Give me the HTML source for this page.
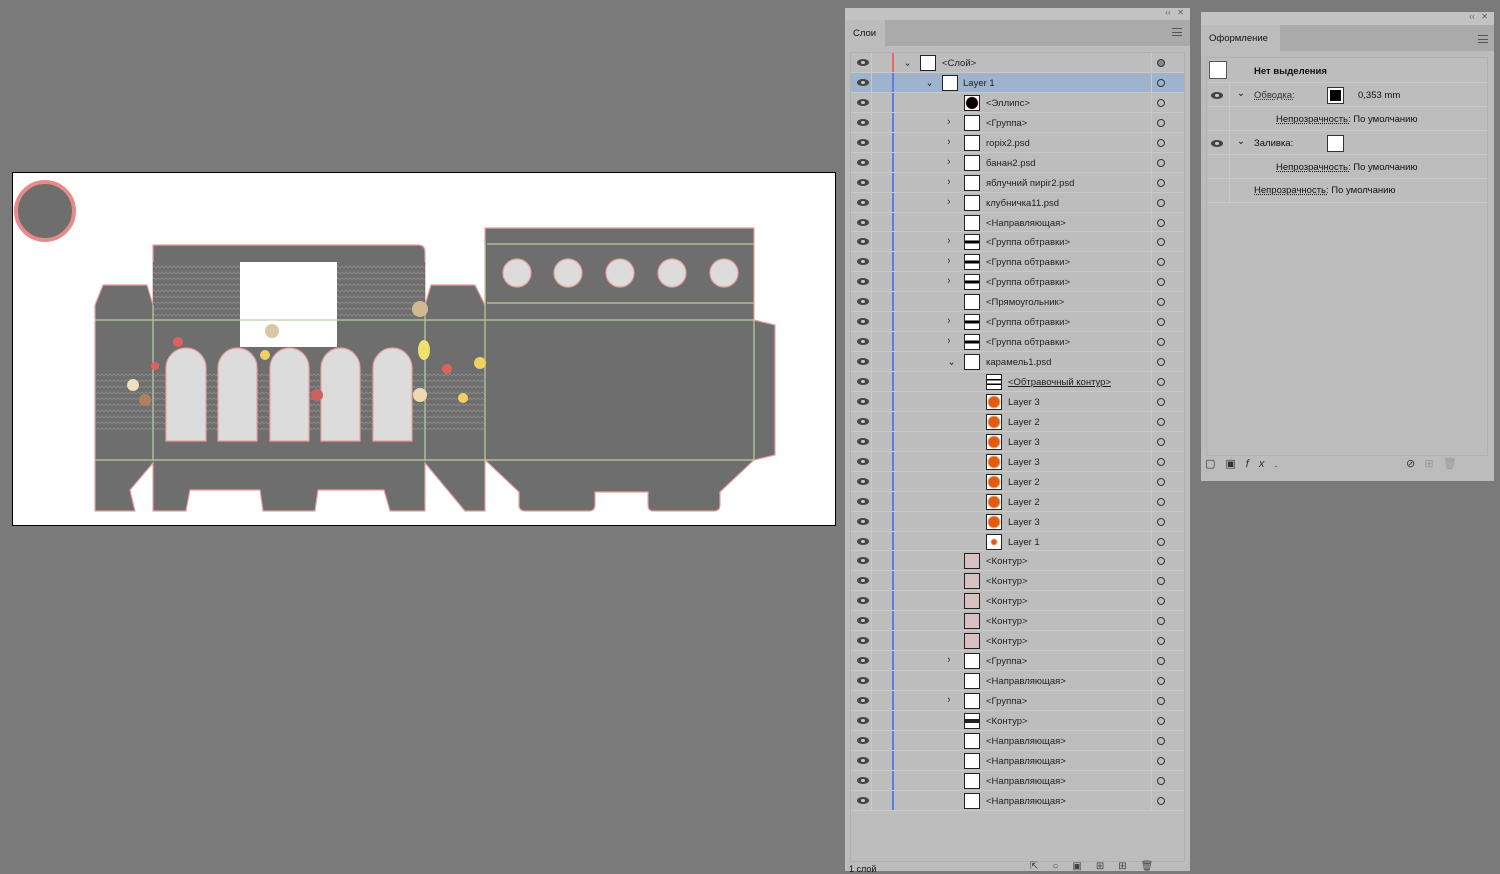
<!DOCTYPE html>
<html><head><meta charset="utf-8"><style>
*{margin:0;padding:0;box-sizing:border-box}
body{width:1500px;height:871px;background:#7a7a7a;position:relative;overflow:hidden;font-family:"Liberation Sans","DejaVu Sans",sans-serif;font-size:9.5px;color:#111}
.p{position:absolute;background:#bcbcbc}
.lst{position:absolute;left:5px;top:44px;width:335px;background:#bdbdbd;border:1px solid #b0b0b0}
.r{position:relative;height:19.94px;border-bottom:1px solid #c9c9c9}
.r.s{background:#9eb3cd}
.r>*{position:absolute}
.e{left:6px;top:6px;width:12px;height:7px;border-radius:50%;background:#444}
.e::after{content:"";position:absolute;left:4px;top:2px;width:4px;height:3px;border-radius:50%;background:#ccc}
.d1{left:20px;top:0;width:1px;height:100%;background:#c9c9c9}
.b{left:41px;top:0;width:2px;height:100%;background:#5a7fe0}
.d2{left:300px;top:0;width:1px;height:100%;background:#c9c9c9}
.c{left:306px;top:6px;width:8px;height:8px;border:1px solid #333;border-radius:50%}
.t{top:2px;width:16px;height:16px;background:#fff;border:1px solid #222}
.x{top:5px;font-size:9.5px;color:#222}
.a{top:3px;font-size:11px;color:#222;transform:scaleX(.8)}
.ap{position:absolute;left:1207px;width:281px;height:24px;border-bottom:1px solid #c9c9c9;font-size:9.5px}
.ap>*{position:absolute}
u{text-decoration:underline dotted}
</style></head><body>

<svg style="position:absolute;left:0;top:0" width="845" height="871">
<defs><pattern id="pt" width="8" height="6" patternUnits="userSpaceOnUse"><rect width="8" height="6" fill="#6e6e6e"/><path d="M0 4 L2 2 L4 4 L6 2 L8 4" stroke="#8a8a8a" stroke-width=".8" fill="none"/></pattern></defs>
<rect x="12.5" y="172.5" width="823" height="353" fill="#fff" stroke="#000"/>
<circle cx="45" cy="211" r="29" fill="#6e6e6e" stroke="#e88a8a" stroke-width="4"/>
<g fill="#6e6e6e" stroke="#e8a0a0" stroke-width="1.2">
<path d="M103 285 H147 L153 305 V245 Q153 245 160 245 H418 Q425 245 425 252 V305 L431 285 H475 L485 305 V228 H754 V320 L775 325 V455 L754 460 L720 492 V505 Q720 511 714 511 H653 Q648 511 648 505 V492 H595 V505 Q595 511 589 511 H525 Q519 511 519 505 V492 L485 460 V511 H465 L425 463 V511 H390 L384 490 H318 L315 511 H263 L260 490 H190 L186 511 H153 V463 L130 490 L135 511 H95 V305 Z"/>
</g>
<rect x="153" y="262" width="272" height="58" fill="url(#pt)"/>
<rect x="96" y="373" width="389" height="60" fill="url(#pt)"/>
<rect x="240" y="262" width="97" height="85" fill="#fff"/>
<g stroke="#b8d0a0" stroke-width="1.2">
<line x1="95" y1="320" x2="754" y2="320"/><line x1="95" y1="460" x2="754" y2="460"/>
<line x1="153" y1="305" x2="153" y2="460"/><line x1="425" y1="305" x2="425" y2="460"/><line x1="485" y1="244" x2="485" y2="460"/><line x1="754" y1="320" x2="754" y2="460"/>
<line x1="487" y1="244" x2="754" y2="244"/><line x1="487" y1="303" x2="754" y2="303"/>
</g>
<g fill="#dcdcdc" stroke="#e8a0a0" stroke-width="1.2">
<path d="M166 441V368a20 20 0 0 1 40 0V441Z"/><path d="M218 441V368a19.5 20 0 0 1 39 0V441Z"/><path d="M270 441V368a19.5 20 0 0 1 39 0V441Z"/><path d="M321 441V368a19.5 20 0 0 1 39 0V441Z"/><path d="M373 441V368a19.5 20 0 0 1 39 0V441Z"/>
<circle cx="517" cy="273" r="14"/><circle cx="568" cy="273" r="14"/><circle cx="620" cy="273" r="14"/><circle cx="672" cy="273" r="14"/><circle cx="724" cy="273" r="14"/>
</g>
<g>
<circle cx="272" cy="331" r="7" fill="#d8c8a8"/><circle cx="420" cy="309" r="8" fill="#d0b890"/><ellipse cx="424" cy="350" rx="6" ry="10" fill="#f0e070"/>
<circle cx="178" cy="342" r="5" fill="#e06060"/><circle cx="145" cy="400" r="6" fill="#b08060"/><circle cx="133" cy="385" r="6" fill="#f0e0c0"/><circle cx="447" cy="369" r="5" fill="#e06060"/><circle cx="480" cy="363" r="6" fill="#f0d060"/><circle cx="420" cy="395" r="7" fill="#f0d8b0"/><circle cx="265" cy="355" r="5" fill="#f0d060"/><circle cx="317" cy="395" r="6" fill="#d06060"/><circle cx="155" cy="366" r="4" fill="#e06060"/><circle cx="463" cy="398" r="5" fill="#f0d060"/>
</g>
</svg>

<div class="p" style="left:845px;top:8px;width:345px;height:863px">
<div style="position:absolute;left:0;top:0;width:345px;height:12px;background:#c2c2c2;font-size:8px;color:#555;text-align:right;padding-right:6px">‹‹ &nbsp; ✕</div>
<div style="position:absolute;left:0;top:12px;width:345px;height:26px;background:#aaaaaa"></div>
<div style="position:absolute;left:0;top:12px;width:40px;height:26px;background:#bcbcbc;padding:8px 0 0 8px;font-size:9.5px">Слои</div>
<div style="position:absolute;right:8px;top:20px;width:10px;height:8px;border-top:1px solid #555;border-bottom:1px solid #555"><div style="margin-top:2.5px;border-top:1px solid #555"></div></div>
<div class="lst" style="height:810px">
<div class="r"><i class="e"></i><i class="d1"></i><i class="b" style="background:#e66"></i><span class="a" style="left:52px">⌄</span><i class="t" style="left:69px"></i><span class="x" style="left:91px">&lt;Слой&gt;</span><i class="d2"></i><i class="c" style="background:#888"></i></div>
<div class="r s"><i class="e"></i><i class="d1"></i><i class="b"></i><span class="a" style="left:74px">⌄</span><i class="t" style="left:91px"></i><span class="x" style="left:112px">Layer 1</span><i class="d2"></i><i class="c"></i></div>
<div class="r"><i class="e"></i><i class="d1"></i><i class="b"></i><i class="t" style="left:113px;background:radial-gradient(#000 55%,#a33 60%,#fff 65%)"></i><span class="x" style="left:135px">&lt;Эллипс&gt;</span><i class="d2"></i><i class="c"></i></div>
<div class="r"><i class="e"></i><i class="d1"></i><i class="b"></i><span class="a" style="left:96px">›</span><i class="t" style="left:113px"></i><span class="x" style="left:135px">&lt;Группа&gt;</span><i class="d2"></i><i class="c"></i></div>
<div class="r"><i class="e"></i><i class="d1"></i><i class="b"></i><span class="a" style="left:96px">›</span><i class="t" style="left:113px"></i><span class="x" style="left:135px">ropix2.psd</span><i class="d2"></i><i class="c"></i></div>
<div class="r"><i class="e"></i><i class="d1"></i><i class="b"></i><span class="a" style="left:96px">›</span><i class="t" style="left:113px"></i><span class="x" style="left:135px">банан2.psd</span><i class="d2"></i><i class="c"></i></div>
<div class="r"><i class="e"></i><i class="d1"></i><i class="b"></i><span class="a" style="left:96px">›</span><i class="t" style="left:113px"></i><span class="x" style="left:135px">яблучний пиріг2.psd</span><i class="d2"></i><i class="c"></i></div>
<div class="r"><i class="e"></i><i class="d1"></i><i class="b"></i><span class="a" style="left:96px">›</span><i class="t" style="left:113px"></i><span class="x" style="left:135px">клубничка11.psd</span><i class="d2"></i><i class="c"></i></div>
<div class="r"><i class="e"></i><i class="d1"></i><i class="b"></i><i class="t" style="left:113px"></i><span class="x" style="left:135px">&lt;Направляющая&gt;</span><i class="d2"></i><i class="c"></i></div>
<div class="r"><i class="e"></i><i class="d1"></i><i class="b"></i><span class="a" style="left:96px">›</span><i class="t" style="left:113px;background:linear-gradient(#fff 40%,#000 40%,#000 60%,#fff 60%)"></i><span class="x" style="left:135px">&lt;Группа обтравки&gt;</span><i class="d2"></i><i class="c"></i></div>
<div class="r"><i class="e"></i><i class="d1"></i><i class="b"></i><span class="a" style="left:96px">›</span><i class="t" style="left:113px;background:linear-gradient(#fff 40%,#000 40%,#000 60%,#fff 60%)"></i><span class="x" style="left:135px">&lt;Группа обтравки&gt;</span><i class="d2"></i><i class="c"></i></div>
<div class="r"><i class="e"></i><i class="d1"></i><i class="b"></i><span class="a" style="left:96px">›</span><i class="t" style="left:113px;background:linear-gradient(#fff 40%,#000 40%,#000 60%,#fff 60%)"></i><span class="x" style="left:135px">&lt;Группа обтравки&gt;</span><i class="d2"></i><i class="c"></i></div>
<div class="r"><i class="e"></i><i class="d1"></i><i class="b"></i><i class="t" style="left:113px"></i><span class="x" style="left:135px">&lt;Прямоугольник&gt;</span><i class="d2"></i><i class="c"></i></div>
<div class="r"><i class="e"></i><i class="d1"></i><i class="b"></i><span class="a" style="left:96px">›</span><i class="t" style="left:113px;background:linear-gradient(#fff 40%,#000 40%,#000 60%,#fff 60%)"></i><span class="x" style="left:135px">&lt;Группа обтравки&gt;</span><i class="d2"></i><i class="c"></i></div>
<div class="r"><i class="e"></i><i class="d1"></i><i class="b"></i><span class="a" style="left:96px">›</span><i class="t" style="left:113px;background:linear-gradient(#fff 40%,#000 40%,#000 60%,#fff 60%)"></i><span class="x" style="left:135px">&lt;Группа обтравки&gt;</span><i class="d2"></i><i class="c"></i></div>
<div class="r"><i class="e"></i><i class="d1"></i><i class="b"></i><span class="a" style="left:96px">⌄</span><i class="t" style="left:113px"></i><span class="x" style="left:135px">карамель1.psd</span><i class="d2"></i><i class="c"></i></div>
<div class="r"><i class="e"></i><i class="d1"></i><i class="b"></i><i class="t" style="left:135px;background:linear-gradient(#fff 30%,#000 30%,#000 40%,#fff 40%,#fff 60%,#000 60%,#000 70%,#fff 70%)"></i><span class="x" style="left:157px;text-decoration:underline">&lt;Обтравочный контур&gt;</span><i class="d2"></i><i class="c"></i></div>
<div class="r"><i class="e"></i><i class="d1"></i><i class="b"></i><i class="t" style="left:135px;background:radial-gradient(#e05a10 50%,#fff 70%)"></i><span class="x" style="left:157px">Layer 3</span><i class="d2"></i><i class="c"></i></div>
<div class="r"><i class="e"></i><i class="d1"></i><i class="b"></i><i class="t" style="left:135px;background:radial-gradient(#e05a10 50%,#fff 70%)"></i><span class="x" style="left:157px">Layer 2</span><i class="d2"></i><i class="c"></i></div>
<div class="r"><i class="e"></i><i class="d1"></i><i class="b"></i><i class="t" style="left:135px;background:radial-gradient(#e05a10 50%,#fff 70%)"></i><span class="x" style="left:157px">Layer 3</span><i class="d2"></i><i class="c"></i></div>
<div class="r"><i class="e"></i><i class="d1"></i><i class="b"></i><i class="t" style="left:135px;background:radial-gradient(#e05a10 50%,#fff 70%)"></i><span class="x" style="left:157px">Layer 3</span><i class="d2"></i><i class="c"></i></div>
<div class="r"><i class="e"></i><i class="d1"></i><i class="b"></i><i class="t" style="left:135px;background:radial-gradient(#e05a10 50%,#fff 70%)"></i><span class="x" style="left:157px">Layer 2</span><i class="d2"></i><i class="c"></i></div>
<div class="r"><i class="e"></i><i class="d1"></i><i class="b"></i><i class="t" style="left:135px;background:radial-gradient(#e05a10 50%,#fff 70%)"></i><span class="x" style="left:157px">Layer 2</span><i class="d2"></i><i class="c"></i></div>
<div class="r"><i class="e"></i><i class="d1"></i><i class="b"></i><i class="t" style="left:135px;background:radial-gradient(#e05a10 50%,#fff 70%)"></i><span class="x" style="left:157px">Layer 3</span><i class="d2"></i><i class="c"></i></div>
<div class="r"><i class="e"></i><i class="d1"></i><i class="b"></i><i class="t" style="left:135px;background:radial-gradient(#e05a10 20%,#fff 40%)"></i><span class="x" style="left:157px">Layer 1</span><i class="d2"></i><i class="c"></i></div>
<div class="r"><i class="e"></i><i class="d1"></i><i class="b"></i><i class="t" style="left:113px;background:#d8c0c0"></i><span class="x" style="left:135px">&lt;Контур&gt;</span><i class="d2"></i><i class="c"></i></div>
<div class="r"><i class="e"></i><i class="d1"></i><i class="b"></i><i class="t" style="left:113px;background:#d8c0c0"></i><span class="x" style="left:135px">&lt;Контур&gt;</span><i class="d2"></i><i class="c"></i></div>
<div class="r"><i class="e"></i><i class="d1"></i><i class="b"></i><i class="t" style="left:113px;background:#d8c0c0"></i><span class="x" style="left:135px">&lt;Контур&gt;</span><i class="d2"></i><i class="c"></i></div>
<div class="r"><i class="e"></i><i class="d1"></i><i class="b"></i><i class="t" style="left:113px;background:#d8c0c0"></i><span class="x" style="left:135px">&lt;Контур&gt;</span><i class="d2"></i><i class="c"></i></div>
<div class="r"><i class="e"></i><i class="d1"></i><i class="b"></i><i class="t" style="left:113px;background:#d8c0c0"></i><span class="x" style="left:135px">&lt;Контур&gt;</span><i class="d2"></i><i class="c"></i></div>
<div class="r"><i class="e"></i><i class="d1"></i><i class="b"></i><span class="a" style="left:96px">›</span><i class="t" style="left:113px"></i><span class="x" style="left:135px">&lt;Группа&gt;</span><i class="d2"></i><i class="c"></i></div>
<div class="r"><i class="e"></i><i class="d1"></i><i class="b"></i><i class="t" style="left:113px"></i><span class="x" style="left:135px">&lt;Направляющая&gt;</span><i class="d2"></i><i class="c"></i></div>
<div class="r"><i class="e"></i><i class="d1"></i><i class="b"></i><span class="a" style="left:96px">›</span><i class="t" style="left:113px"></i><span class="x" style="left:135px">&lt;Группа&gt;</span><i class="d2"></i><i class="c"></i></div>
<div class="r"><i class="e"></i><i class="d1"></i><i class="b"></i><i class="t" style="left:113px;background:linear-gradient(#fff 35%,#222 35%,#222 65%,#fff 65%)"></i><span class="x" style="left:135px">&lt;Контур&gt;</span><i class="d2"></i><i class="c"></i></div>
<div class="r"><i class="e"></i><i class="d1"></i><i class="b"></i><i class="t" style="left:113px"></i><span class="x" style="left:135px">&lt;Направляющая&gt;</span><i class="d2"></i><i class="c"></i></div>
<div class="r"><i class="e"></i><i class="d1"></i><i class="b"></i><i class="t" style="left:113px"></i><span class="x" style="left:135px">&lt;Направляющая&gt;</span><i class="d2"></i><i class="c"></i></div>
<div class="r"><i class="e"></i><i class="d1"></i><i class="b"></i><i class="t" style="left:113px"></i><span class="x" style="left:135px">&lt;Направляющая&gt;</span><i class="d2"></i><i class="c"></i></div>
<div class="r"><i class="e"></i><i class="d1"></i><i class="b"></i><i class="t" style="left:113px"></i><span class="x" style="left:135px">&lt;Направляющая&gt;</span><i class="d2"></i><i class="c"></i></div>
</div>
<div style="position:absolute;left:4px;top:856px;font-size:9px">1 слой</div>
<div style="position:absolute;left:185px;top:853px;font-size:10px;color:#444;letter-spacing:14px">⇱○▣⊞⊞🗑</div>
</div>

<div class="p" style="left:1201px;top:12px;width:293px;height:469px">
<div style="position:absolute;left:0;top:0;width:293px;height:13px;background:#c2c2c2;font-size:8px;color:#555;text-align:right;padding-right:6px">‹‹ &nbsp; ✕</div>
<div style="position:absolute;left:0;top:13px;width:293px;height:26px;background:#aaaaaa"></div>
<div style="position:absolute;left:0;top:13px;width:79px;height:26px;background:#bcbcbc;padding:8px 0 0 8px;font-size:9.5px">Оформление</div>
<div style="position:absolute;right:6px;top:23px;width:10px;height:8px;border-top:1px solid #555;border-bottom:1px solid #555"><div style="margin-top:2.5px;border-top:1px solid #555"></div></div>
<div style="position:absolute;left:5px;top:45px;width:282px;height:399px;background:#bdbdbd;border:1px solid #b0b0b0"></div>
<div style="position:absolute;left:4px;top:445px;font-size:11px;color:#333;letter-spacing:10px">▢▣<i>fx</i>.</div>
<div style="position:absolute;left:205px;top:445px;font-size:11px;color:#333">⊘ &nbsp; <span style="color:#999">⊞ &nbsp; 🗑</span></div>
</div>
<div class="ap" style="top:59px"><i style="left:2px;top:2px;width:18px;height:18px;background:#fff;border:1px solid #555"></i><b style="left:47px;top:7px">Нет выделения</b></div>
<div class="ap" style="top:83px"><i class="e" style="left:4px;top:9px;width:12px;height:7px;border-radius:50%;background:#444"></i><i style="left:22px;top:0;width:1px;height:24px;background:#c9c9c9"></i><span style="left:30px;top:5px">⌄</span><span style="left:47px;top:7px;color:#333"><u>Обводка:</u></span><i style="left:120px;top:4px;width:17px;height:17px;border:1px solid #333;background:#fff;padding:2px"><i style="display:block;width:11px;height:11px;background:#000"></i></i><span style="left:151px;top:7px">0,353 mm</span></div>
<div class="ap" style="top:107px"><i style="left:22px;top:0;width:1px;height:24px;background:#c9c9c9"></i><span style="left:69px;top:7px"><u>Непрозрачность:</u> По умолчанию</span></div>
<div class="ap" style="top:131px"><i class="e" style="left:4px;top:9px;width:12px;height:7px;border-radius:50%;background:#444"></i><i style="left:22px;top:0;width:1px;height:24px;background:#c9c9c9"></i><span style="left:30px;top:5px">⌄</span><span style="left:47px;top:7px">Заливка:</span><i style="left:120px;top:4px;width:17px;height:17px;border:1px solid #333;background:#fff"></i></div>
<div class="ap" style="top:155px"><i style="left:22px;top:0;width:1px;height:24px;background:#c9c9c9"></i><span style="left:69px;top:7px"><u>Непрозрачность:</u> По умолчанию</span></div>
<div class="ap" style="top:179px"><i style="left:22px;top:0;width:1px;height:24px;background:#c9c9c9"></i><span style="left:47px;top:6px"><u>Непрозрачность:</u> По умолчанию</span></div>
</body></html>
